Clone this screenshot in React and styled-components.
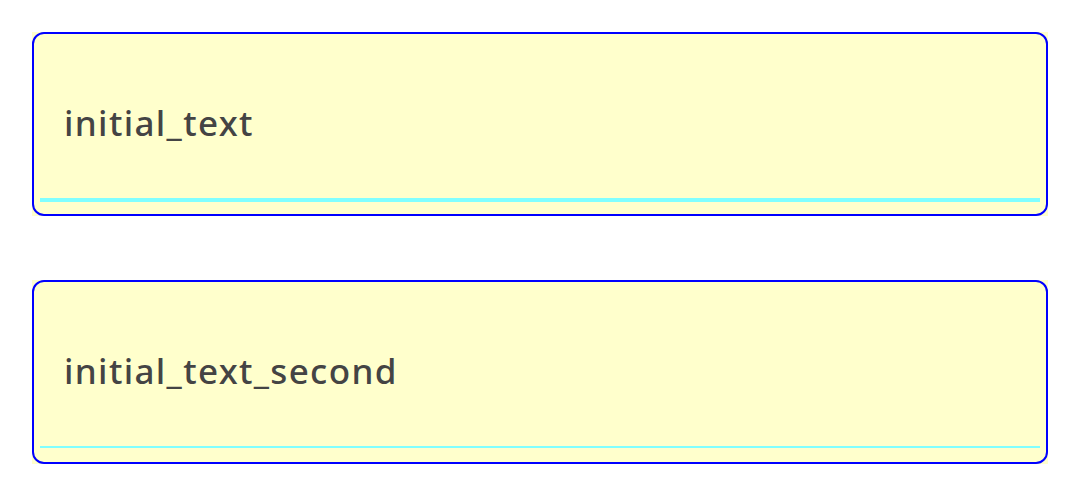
import React from "react";
import styled, { createGlobalStyle } from "styled-components";

const Global = createGlobalStyle`
  html, body { margin: 0; padding: 0; background: #ffffff; }
  body { font-family: "Noto Sans", "Open Sans", sans-serif; }
`;

const Page = styled.div`
  display: flex;
  flex-direction: column;
  gap: 64px;
  padding: 32px;
`;

const Field = styled.div`
  width: 1016px;
  height: 184px;
  background: #ffffcc;
`;

const Frame = styled.div`
  box-sizing: border-box;
  height: 100%;
  border: 2px solid #0000ff;
  border-radius: 12px;
  padding: 0 6px;
`;

const Input = styled.div`
  box-sizing: content-box;
  height: 164px;
  border-bottom: ${(p) => (p.$focused ? 4 : 2)}px solid #80ffff;
`;

const Label = styled.div`
  padding: 65px 0 0 24px;
  font-family: "Noto Sans", "Open Sans", sans-serif;
  font-weight: 500;
  font-size: 35px;
  letter-spacing: 1.35px;
  line-height: 48px;
  color: #444444;
  white-space: nowrap;
`;

export default function App() {
  return (
    <>
      <Global />
      <Page>
        <Field>
          <Frame>
            <Input $focused>
              <Label>initial_text</Label>
            </Input>
          </Frame>
        </Field>
        <Field>
          <Frame>
            <Input>
              <Label>initial_text_second</Label>
            </Input>
          </Frame>
        </Field>
      </Page>
    </>
  );
}
